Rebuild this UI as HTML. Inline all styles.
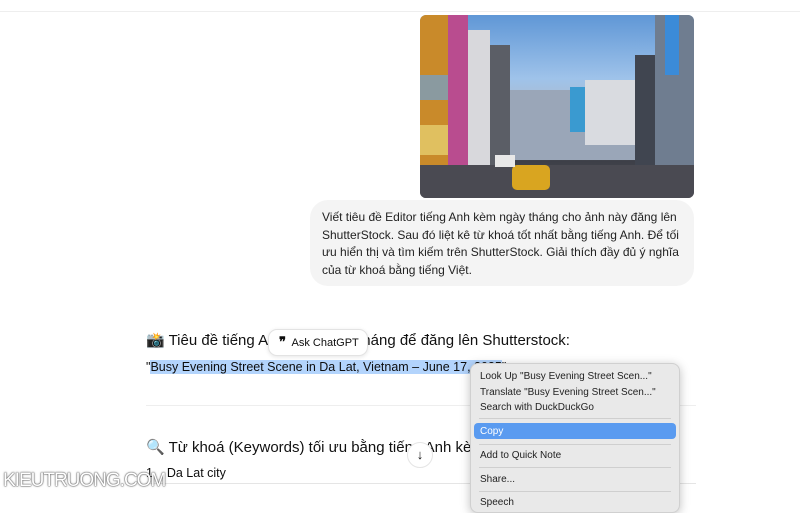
<!DOCTYPE html>
<html><head><meta charset="utf-8"><style>
*{margin:0;padding:0;box-sizing:border-box}
body{width:800px;height:500px;overflow:hidden;background:#fff;font-family:"Liberation Sans",sans-serif;color:#0d0d0d;position:relative}
.a{position:absolute}
.photo{left:420px;top:15px;width:274px;height:183px;border-radius:6px;overflow:hidden;background:linear-gradient(#5f97d6 0%,#9fc3ea 35%,#b0b8c4 55%,#3d3f48 80%,#555 100%)}
.photo div{position:absolute}
.bubble{left:310px;top:200px;width:384px;height:86px;background:#f4f4f4;border-radius:18px;padding:9px 10px 0 12px;font-size:12px;line-height:17.5px;color:#222}
.h{font-size:15px;color:#111}
.menu{left:470px;top:363px;width:210px;height:150px;background:#e9e9e9;border-radius:8px;box-shadow:0 2px 10px rgba(0,0,0,.25);border:1px solid #d0d0d0;font-size:10px;color:#222}
.menu .i{position:absolute;left:9px}
.sep{position:absolute;left:8px;right:8px;height:1px;background:#cfcfcf}
</style></head><body>
<div class="a" style="left:0;top:11px;width:800px;height:1px;background:#eee"></div>
<div class="a photo">
 <div style="left:0;top:0;width:30px;height:165px;background:#c98a2a"></div>
 <div style="left:0;top:60px;width:28px;height:25px;background:#8a9aa0"></div>
 <div style="left:0;top:110px;width:30px;height:30px;background:#e0c060"></div>
 <div style="left:28px;top:0;width:20px;height:160px;background:#b94c8f"></div>
 <div style="left:48px;top:15px;width:22px;height:150px;background:#d8d8dc"></div>
 <div style="left:70px;top:30px;width:20px;height:135px;background:#5b5e66"></div>
 <div style="left:90px;top:75px;width:140px;height:70px;background:#9aa6b8"></div>
 <div style="left:150px;top:72px;width:15px;height:45px;background:#3a9ad0"></div>
 <div style="left:165px;top:65px;width:50px;height:65px;background:#d9dbe0"></div>
 <div style="left:215px;top:40px;width:20px;height:125px;background:#404550"></div>
 <div style="left:235px;top:0;width:39px;height:170px;background:#6f7d90"></div>
 <div style="left:245px;top:0;width:14px;height:60px;background:#3b8bd8"></div>
 <div style="left:0;top:150px;width:274px;height:33px;background:#4a4a52"></div>
 <div style="left:92px;top:150px;width:38px;height:25px;background:#d9a520;border-radius:5px"></div>
 <div style="left:75px;top:140px;width:20px;height:12px;background:#e8e8e8"></div>
</div>
<div class="a bubble">Viết tiêu đề Editor tiếng Anh kèm ngày tháng cho ảnh này đăng lên ShutterStock. Sau đó liệt kê từ khoá tốt nhất bằng tiếng Anh. Để tối ưu hiển thị và tìm kiếm trên ShutterStock. Giải thích đầy đủ ý nghĩa của từ khoá bằng tiếng Việt.</div>
<div class="a h" style="left:146px;top:331px">📸 Tiêu đề tiếng Anh kèm ngày tháng để đăng lên Shutterstock:</div>
<div class="a" style="left:268px;top:329px;width:100px;height:27px;background:#fff;border:1px solid #e3e3e3;border-radius:9px;box-shadow:0 1px 4px rgba(0,0,0,.1);font-size:11px;padding:7px 0 0 10px"><b style="font-size:13px;line-height:10px">❞</b>&nbsp; Ask ChatGPT</div>
<div class="a" style="left:146px;top:360px;font-size:12.5px">"<span style="background:#b3d4fc">Busy Evening Street Scene in Da Lat, Vietnam – June 17, 2025</span>"</div>
<div class="a" style="left:146px;top:405px;width:550px;height:1px;background:#eee"></div>
<div class="a h" style="left:146px;top:438px">🔍 Từ khoá (Keywords) tối ưu bằng tiếng Anh kèm</div>
<div class="a" style="left:407px;top:442px;width:26px;height:26px;border-radius:50%;background:#fff;border:1px solid #e5e5e5;text-align:center;font-size:13px;line-height:24px">↓</div>
<div class="a" style="left:146px;top:466px;font-size:12.5px">1.&nbsp;&nbsp; Da Lat city</div>
<div class="a" style="left:146px;top:483px;width:550px;height:1px;background:#e5e5e5"></div>
<div class="a" style="left:3px;top:470px;font-size:19px;color:#fff;letter-spacing:-1px;text-shadow:0 0 1px #555,0 0 1px #555,0 0 2px #777">KIEUTRUONG.COM</div>
<div class="a menu">
 <div class="i" style="top:7px">Look Up "Busy Evening Street Scen..."</div>
 <div class="i" style="top:23px">Translate "Busy Evening Street Scen..."</div>
 <div class="i" style="top:38px">Search with DuckDuckGo</div>
 <div class="sep" style="top:54px"></div>
 <div style="position:absolute;left:3px;right:3px;top:59px;height:16px;background:#5a9bf0;border-radius:4px;color:#fff;padding:3px 6px">Copy</div>
 <div class="sep" style="top:80px"></div>
 <div class="i" style="top:86px">Add to Quick Note</div>
 <div class="sep" style="top:103px"></div>
 <div class="i" style="top:110px">Share...</div>
 <div class="sep" style="top:127px"></div>
 <div class="i" style="top:133px">Speech</div>
</div>
</body></html>
